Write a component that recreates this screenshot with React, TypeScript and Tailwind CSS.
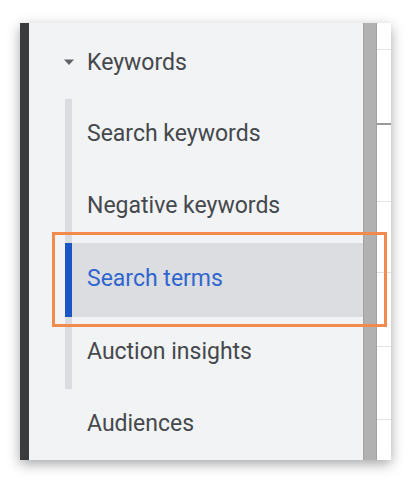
import React from "react";

const items = ["Search keywords", "Negative keywords", "Search terms", "Auction insights"];

export default function App() {
  return (
    <div className="w-[419px] h-[490px] bg-white pl-[20px] pt-[23px] font-['Roboto',sans-serif]">
      <div className="relative flex w-[371px] h-[437px] shadow-[0_4px_12px_rgba(0,0,0,0.35)]">
        {/* dark edge */}
        <div className="w-[9px] bg-[#3a3b3d]" />

        {/* nav */}
        <div className="flex-1 bg-[#f1f3f4] flex flex-col text-[23px] text-[#45484c]">
          <div className="h-[76px] pt-[4px] flex items-center">
            <svg width="12" height="7" viewBox="0 0 12 7" className="ml-[34px] mr-[12px]">
              <path d="M1 0.5 L11 0.5 L6 6 Z" fill="#5f6368" />
            </svg>
            <span>Keywords</span>
          </div>

          <div className="ml-[36px] border-l-[7px] border-[#dadce0] flex flex-col">
            {items.map((label) =>
              label === "Search terms" ? (
                <div
                  key={label}
                  className="-ml-[7px] h-[74px] border-l-[7px] border-[#1a56c4] bg-[#dcdde0] pl-[15px] flex items-center text-[#2f66cf]"
                >
                  {label}
                </div>
              ) : (
                <div key={label} className="h-[72px] pl-[15px] flex items-center">
                  {label}
                </div>
              )
            )}
          </div>

          <div className="h-[72px] pl-[58px] flex items-center">Audiences</div>
        </div>

        {/* scrollbar */}
        <div className="w-[14px] bg-[#b1b1b1] border-x border-[#a2a2a2]" />

        {/* table edge */}
        <div className="w-[14px] bg-white flex flex-col">
          <div className="h-[27px] border-b border-[#e3e3e3]" />
          <div className="h-[75px] border-b-2 border-[#9a9a9a]" />
          <div className="h-[77px] border-b border-[#e3e3e3]" />
          <div className="h-[71px] border-b border-[#e3e3e3]" />
          <div className="h-[74px] border-b border-[#e3e3e3]" />
          <div className="h-[73px] border-b border-[#e3e3e3]" />
          <div className="flex-1" />
        </div>

        {/* callout */}
        <div className="absolute left-[32px] top-[209px] w-[335px] h-[95px] border-[3px] border-[#f28a4c]" />
      </div>
    </div>
  );
}
